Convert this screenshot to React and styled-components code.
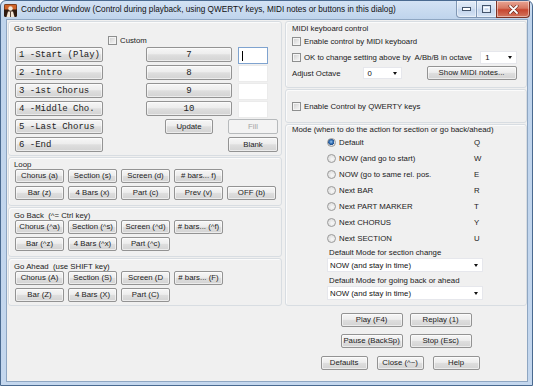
import React from 'react';
import styled, {createGlobalStyle} from 'styled-components';

const GlobalStyle = createGlobalStyle`
    html, body { margin: 0; padding: 0; background: #ffffff; }
    body { font-family: "Liberation Sans", Arial, sans-serif; }
`;

const UI = `"Liberation Sans", Arial, sans-serif`;
const MONO = `"Liberation Mono", "Courier New", monospace`;

const Window = styled.div`
    width: 533px;
    height: 386px;
    box-sizing: border-box;
    display: flex;
    flex-direction: column;
    border: 1px solid #4a6a90;
    border-radius: 6px 6px 0 0;
    background: linear-gradient(#d3e2f4, #bfd4ec 18px, #c4d7ee);
    overflow: hidden;
`;

const TitleBar = styled.div`
    height: 18px;
    display: flex;
    align-items: flex-start;
    flex-shrink: 0;
`;

const AppIcon = styled.svg`
    width: 13px;
    height: 13px;
    margin: 3px 4px 0 3px;
    flex-shrink: 0;
`;

const TitleText = styled.div`
    flex: 1;
    font: 8.2px ${UI};
    color: #111;
    line-height: 18px;
    white-space: nowrap;
    overflow: hidden;
`;

const Controls = styled.div`
    display: flex;
    margin-right: 2px;
`;

const CtrlBtn = styled.div`
    width: ${p => p.$w}px;
    height: 17px;
    box-sizing: border-box;
    display: flex;
    align-items: center;
    justify-content: center;
    border: 1px solid ${p => p.$close ? '#7a3326' : '#8097b4'};
    border-top: none;
    margin-left: -1px;
    border-radius: ${p => p.$r || '0'};
    background: ${p => p.$close
        ? 'linear-gradient(#e8a594, #d67862 45%, #c7462f 55%, #d2765f)'
        : 'linear-gradient(#e4edf8, #d2e0f1 45%, #c3d5ec 55%, #d6e4f5)'};
    box-shadow: inset 0 0 0 1px rgba(255,255,255,.45);
`;

const Body = styled.div`
    flex: 1;
    margin: 0 4px 3px 5px;
    border: 1px solid #8ea6c2;
    background: #f0f0f0;
    display: flex;
    gap: 3px;
    padding: 1px 0 0 1px;
`;

const Column = styled.div`
    width: ${p => p.$w ? p.$w + 'px' : 'auto'};
    flex: ${p => p.$w ? 'none' : 1};
    display: flex;
    flex-direction: column;
    gap: 1px;
`;

const Group = styled.div`
    box-sizing: border-box;
    height: ${p => p.$h}px;
    border: 1px solid #d8dde2;
    border-radius: 3px;
    box-shadow: inset 1px 1px 0 #fbfbfb;
    padding: ${p => p.$pad || '2px 5px 0 5px'};
    display: flex;
    flex-direction: column;
`;

const Label = styled.div`
    font: 7.8px ${UI};
    line-height: ${p => p.$lh || 9}px;
    color: #1a1a1a;
    white-space: nowrap;
    margin-left: ${p => p.$ml || 0}px;
    margin-top: ${p => p.$mt || 0}px;
`;

const Btn = styled.button`
    box-sizing: border-box;
    width: ${p => p.$w ? p.$w + 'px' : '100%'};
    height: ${p => p.$h || 14}px;
    margin: 0 0 0 ${p => p.$ml || 0}px;
    padding: 0;
    border: 1px solid #939393;
    border-radius: 2px;
    background: linear-gradient(#f6f6f6, #ededed 45%, #dedede 52%, #d3d3d3);
    box-shadow: inset 0 0 0 1px rgba(255,255,255,.55);
    font: 7.8px ${UI};
    line-height: 1;
    color: #1b1b1b;
    white-space: nowrap;
    &:disabled {
        border-color: #b7babc;
        background: #f3f3f3;
        color: #a3a3a3;
        box-shadow: none;
    }
`;

const SectionBtn = styled(Btn)`
    font: 9px ${MONO};
    text-align: ${p => p.$center ? 'center' : 'left'};
    padding-left: ${p => p.$center ? 0 : 3}px;
    color: #222;
`;

const SectionGrid = styled.div`
    display: grid;
    grid-template-columns: [sec] 88px 43px [num] 19px [upd] 48px 15px [fill] 4px [numend] 6px [inp] 30px [inpend] 10px [fillend];
    grid-auto-rows: 18px;
    margin: 1px 0 0 1px;
`;

const Cell = styled.div`
    grid-column: ${p => p.$col};
    grid-row: ${p => p.$row};
    display: flex;
    align-items: flex-start;
`;

const CellInput = styled.div`
    box-sizing: border-box;
    width: 30px;
    height: 17px;
    background: #fff;
    border: 1px solid ${p => p.$focus ? '#7fa3cf' : '#ebebeb'};
    padding: 3px 0 0 3px;
`;

const Caret = styled.div`
    width: 1px;
    height: 10px;
    background: #000;
`;

const CheckRow = styled.div`
    display: flex;
    align-items: center;
    gap: 3px;
    height: ${p => p.$h || 16}px;
    padding-left: ${p => p.$pl || 0}px;
`;

const CheckBox = styled.span`
    box-sizing: border-box;
    width: 9px;
    height: 9px;
    border: 1px solid #8e8f8f;
    background: linear-gradient(135deg, #cdcdcd, #e9e9e9 60%, #f7f7f7);
    box-shadow: inset 0 0 0 1px #f4f4f4;
    flex-shrink: 0;
`;

const ButtonGrid = styled.div`
    display: grid;
    grid-template-columns: repeat(5, 49px);
    column-gap: 4px;
    row-gap: 3px;
    margin-left: 1px;
`;

const Select = styled.div`
    box-sizing: border-box;
    width: ${p => p.$w}px;
    height: ${p => p.$h || 14}px;
    background: #fff;
    border: 1px solid #e6e7ec;
    display: flex;
    align-items: center;
    justify-content: space-between;
    padding: 0 4px 0 ${p => p.$pl || 4}px;
    font: 7.8px ${UI};
    color: #111;
    margin-left: ${p => p.$ml || 0}px;
    margin-top: ${p => p.$mt || 0}px;
    &::after {
        content: '';
        border-left: 2.5px solid transparent;
        border-right: 2.5px solid transparent;
        border-top: 3px solid #111;
    }
`;

const ModeList = styled.div`
    margin: 0 0 0 35px;
    display: flex;
    flex-direction: column;
`;

const RadioRow = styled.div`
    display: grid;
    grid-template-columns: 147px auto;
    align-items: center;
    height: 16px;
`;

const RadioLabel = styled.div`
    display: flex;
    align-items: center;
    gap: 3px;
    font: 7.8px ${UI};
    color: #1a1a1a;
    white-space: nowrap;
`;

const Radio = styled.span`
    box-sizing: border-box;
    width: 9px;
    height: 9px;
    border-radius: 50%;
    border: 1px solid #9a9a9a;
    background: ${p => p.$on
        ? 'radial-gradient(circle at 45% 40%, #9cc8f0 0, #3c78bb 1.6px, #1f4f8e 3px, #dedede 3.3px, #f4f4f4)'
        : 'radial-gradient(circle at 60% 60%, #f8f8f8, #d6d6d6)'};
    flex-shrink: 0;
`;

const KeyChar = styled.span`
    font: 7.8px ${UI};
    color: #1a1a1a;
`;

const ActionArea = styled.div`
    display: flex;
    flex-direction: column;
    align-items: center;
    padding-top: 6px;
`;

const ActionRow = styled.div`
    display: flex;
    gap: ${p => p.$gap}px;
    margin-top: ${p => p.$mt || 0}px;
    margin-right: ${p => p.$mr || 0}px;
`;

const sectionNames = ['1 -Start (Play)', '2 -Intro', '3 -1st Chorus', '4 -Middle Cho.', '5 -Last Chorus', '6 -End'];

const loopButtons = ['Chorus (a)', 'Section (s)', 'Screen (d)', '# bars... f)', '', 'Bar (z)', '4 Bars (x)', 'Part (c)', 'Prev (v)', 'OFF (b)'];
const backButtons = ['Chorus (^a)', 'Section (^s)', 'Screen (^d)', '# bars... (^f)', '', 'Bar (^z)', '4 Bars (^x)', 'Part (^c)'];
const aheadButtons = ['Chorus (A)', 'Section (S)', 'Screen (D', '# bars... (F)', '', 'Bar (Z)', '4 Bars (X)', 'Part (C)'];

const modes = [
    ['Default', 'Q'],
    ['NOW (and go to start)', 'W'],
    ['NOW (go to same rel. pos.', 'E'],
    ['Next BAR', 'R'],
    ['Next PART MARKER', 'T'],
    ['Next CHORUS', 'Y'],
    ['Next SECTION', 'U'],
];

const ButtonSet = ({items}) => (
    <ButtonGrid>
        {items.map((t, i) => t ? <Btn key={i}>{t}</Btn> : <span key={i} />)}
    </ButtonGrid>
);

const App = () => {
    return (
        <>
            <GlobalStyle />
            <Window>
                <TitleBar>
                    <AppIcon viewBox="0 0 13 13">
                        <rect x="0" y="0" width="13" height="13" rx="1.5" fill="#2e1a10" />
                        <rect x="0.5" y="0.5" width="12" height="5" fill="#d0642a" />
                        <circle cx="6.5" cy="4.5" r="2.2" fill="#f3e6d6" />
                        <path d="M2.5 13 L4 7.5 H9 L10.5 13 Z" fill="#f3e6d6" />
                        <path d="M6.5 7.5 V13" stroke="#2e1a10" strokeWidth="0.8" />
                    </AppIcon>
                    <TitleText>Conductor Window (Control during playback, using QWERTY keys, MIDI notes or buttons in this dialog)</TitleText>
                    <Controls>
                        <CtrlBtn $w={21} $r="0 0 0 4px">
                            <svg width="9" height="4" viewBox="0 0 9 4"><rect x="0.5" y="0.5" width="8" height="3" fill="#fff" stroke="#44556c" strokeWidth="1" /></svg>
                        </CtrlBtn>
                        <CtrlBtn $w={21}>
                            <svg width="9" height="8" viewBox="0 0 9 8"><rect x="0.5" y="0.5" width="8" height="7" fill="none" stroke="#44556c" strokeWidth="1" /><rect x="2" y="2.5" width="5" height="3.5" fill="none" stroke="#fff" strokeWidth="1" /></svg>
                        </CtrlBtn>
                        <CtrlBtn $w={34} $close $r="0 0 4px 0">
                            <svg width="11" height="9" viewBox="0 0 11 9"><path d="M2 1 L9 8 M9 1 L2 8" stroke="#5a1d12" strokeWidth="3" strokeLinecap="round" /><path d="M2 1 L9 8 M9 1 L2 8" stroke="#fff" strokeWidth="1.8" strokeLinecap="round" /></svg>
                        </CtrlBtn>
                    </Controls>
                </TitleBar>

                <Body>
                    <Column $w={274}>
                        <Group $h={135} $pad="2px 5px 0 5px">
                            <Label $lh={10}>Go to Section</Label>
                            <CheckRow $h={12} $pl={94}>
                                <CheckBox />
                                <Label>Custom</Label>
                            </CheckRow>
                            <SectionGrid>
                                {sectionNames.map((n, i) => (
                                    <Cell key={n} $col="sec / span 1" $row={i + 1}>
                                        <SectionBtn $w={88} $h={15}>{n}</SectionBtn>
                                    </Cell>
                                ))}
                                {['7', '8', '9', '10'].map((n, i) => (
                                    <Cell key={n} $col="num / numend" $row={i + 1}>
                                        <SectionBtn $h={15} $center>{n}</SectionBtn>
                                    </Cell>
                                ))}
                                {[0, 1, 2, 3].map(i => (
                                    <Cell key={'in' + i} $col="inp / inpend" $row={i + 1}>
                                        <CellInput $focus={i === 0}>{i === 0 && <Caret />}</CellInput>
                                    </Cell>
                                ))}
                                <Cell $col="upd / span 1" $row={5}>
                                    <Btn $h={15}>Update</Btn>
                                </Cell>
                                <Cell $col="fill / fillend" $row={5}>
                                    <Btn $h={15} disabled>Fill</Btn>
                                </Cell>
                                <Cell $col="fill / fillend" $row={6}>
                                    <Btn $h={15}>Blank</Btn>
                                </Cell>
                            </SectionGrid>
                        </Group>

                        <Group $h={49}>
                            <Label>Loop</Label>
                            <ButtonSet items={loopButtons} />
                        </Group>

                        <Group $h={50} $pad="3px 5px 0 5px">
                            <Label>Go Back&nbsp; (^= Ctrl key)</Label>
                            <ButtonSet items={backButtons} />
                        </Group>

                        <Group $h={48} $pad="3px 5px 0 5px">
                            <Label>Go Ahead&nbsp; (use SHIFT key)</Label>
                            <ButtonSet items={aheadButtons} />
                        </Group>
                    </Column>

                    <Column>
                        <Group $h={67} $pad="2px 9px 0 6px">
                            <Label>MIDI keyboard control</Label>
                            <CheckRow>
                                <CheckBox />
                                <Label>Enable control by MIDI keyboard</Label>
                            </CheckRow>
                            <CheckRow>
                                <CheckBox />
                                <Label>OK to change setting above by&nbsp; A/Bb/B in octave</Label>
                                <Select $w={37} $h={13} $ml={5}>1</Select>
                            </CheckRow>
                            <CheckRow>
                                <Label>Adjust Octave</Label>
                                <Select $w={39} $h={12} $ml={19}>0</Select>
                                <Btn $w={90} $ml={22}>Show MIDI notes...</Btn>
                            </CheckRow>
                        </Group>

                        <Group $h={34} $pad="0 6px">
                            <CheckRow $h={32}>
                                <CheckBox />
                                <Label>Enable Control by QWERTY keys</Label>
                            </CheckRow>
                        </Group>

                        <Group $h={182} $pad="1px 6px 0 6px">
                            <Label $lh={8}>Mode (when to do the action for section or go back/ahead)</Label>
                            <ModeList>
                                {modes.map(([m, k], i) => (
                                    <RadioRow key={m}>
                                        <RadioLabel><Radio $on={i === 0} />{m}</RadioLabel>
                                        <KeyChar>{k}</KeyChar>
                                    </RadioRow>
                                ))}
                                <Label $lh={9} $ml={2} $mt={2}>Default Mode for section change</Label>
                                <Select $w={156} $h={14} $pl={2} $mt={1}>NOW (and stay in time)</Select>
                                <Label $lh={9} $ml={2} $mt={4}>Default Mode for going back or ahead</Label>
                                <Select $w={156} $h={14} $pl={2} $mt={1}>NOW (and stay in time)</Select>
                            </ModeList>
                        </Group>

                        <ActionArea>
                            <ActionRow $gap={7}>
                                <Btn $w={62}>Play (F4)</Btn>
                                <Btn $w={62}>Replay (1)</Btn>
                            </ActionRow>
                            <ActionRow $gap={7} $mt={7}>
                                <Btn $w={62}>Pause (BackSp)</Btn>
                                <Btn $w={62}>Stop (Esc)</Btn>
                            </ActionRow>
                            <ActionRow $gap={9} $mt={8} $mr={12}>
                                <Btn $w={47}>Defaults</Btn>
                                <Btn $w={47}>Close (^~)</Btn>
                                <Btn $w={47}>Help</Btn>
                            </ActionRow>
                        </ActionArea>
                    </Column>
                </Body>
            </Window>
        </>
    );
};

export default App;
